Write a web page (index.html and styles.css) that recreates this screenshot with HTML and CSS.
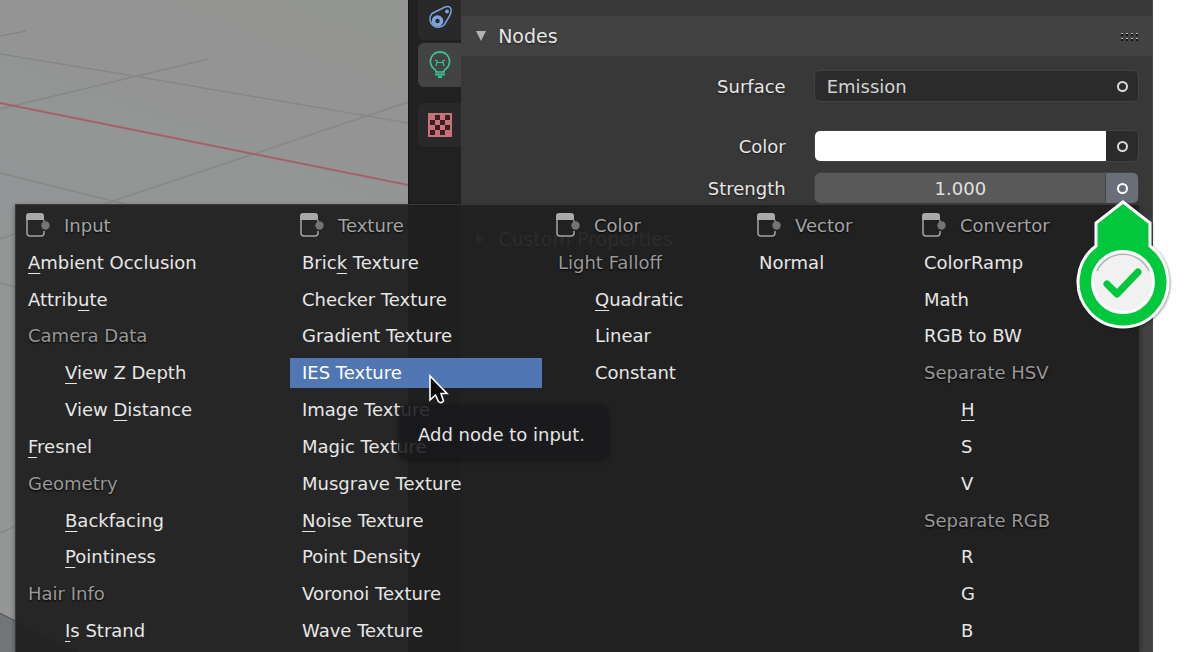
FILE: index.html
```html
<!DOCTYPE html>
<html lang="en">
<head>
    <meta charset="UTF-8">
    <meta name="viewport" content="width=device-width, initial-scale=1.0">
    <title>Light Nodes</title>
    <link rel="stylesheet" href="styles.css">
</head>
<body>
    <svg class="symbols" aria-hidden="true">
        <symbol id="node" viewBox="0 0 24 24">
            <path d="M1 6 V20 Q1 23 4 23 H15 Q18 23 18 20 V18" fill="none" stroke="#a4a4a4" stroke-width="1.500"/>
            <path d="M0 7 V3 Q0 0 3 0 H15 Q18 0 18 3 V7 Z" fill="#a9a9a9"/>
            <path d="M18 7 V9" stroke="#a4a4a4" stroke-width="1.200"/>
            <circle cx="19.500" cy="12.500" r="4.200" fill="#747474"/>
        </symbol>
    </svg>
    <div class="editor">
        <div class="viewport">
            <svg class="floor" viewBox="0 0 408 652" preserveAspectRatio="xMinYMin slice">
                <g class="grid-lines">
                    <path d="M0 36 L26 31"/>
                    <path d="M0 54 L134 76 L408 123"/>
                    <path d="M0 109 L208 59"/>
                    <path d="M0 173 L113 201 L408 102"/>
                    <path d="M113 201 L180 218"/>
                    <path d="M113 201 L0 239"/>
                    <path d="M0 283 L60 299"/>
                    <path d="M0 533 L60 505"/>
                </g>
                <path class="object" d="M-2 612 L78 652 L78 660 H-2 Z"/>
                <path class="axis" d="M0 103 L408 185"/>
            </svg>
        </div>
        <nav class="tabs">
            <button class="tab first" aria-label="Constraints">
                <svg width="26" height="26" viewBox="0 0 26 26" fill="none" stroke="#7fa3dc" stroke-width="1.500">
                    <path d="M5 8.500 L18 2 Q25 0 24 7 Q23.500 9 22 12 L17.500 19.500 A8.200 8.200 0 1 1 5 8.500 Z"/>
                    <circle cx="10.500" cy="16" r="4" stroke-width="3.600"/>
                    <circle cx="20" cy="6.500" r="1.900" fill="#7fa3dc" stroke="none"/>
                </svg>
            </button>
            <button class="tab active" aria-label="Object Data">
                <svg width="26" height="28" viewBox="0 0 26 28" fill="none" stroke="#35c79a" stroke-width="1.600">
                    <path d="M9 21 V20 Q9 19 6.500 17.500 A9.600 9.600 0 1 1 19.500 17.500 Q17 19 17 20 V21 Z"/>
                    <path d="M8 9.500 H10 V11.500 H16 V9.500 H18 M10 11.500 L9 15 M16 11.500 L17 15" stroke-width="1.200"/>
                    <path d="M8 23.500 H18" stroke-width="2"/>
                    <path d="M11 26 H15" stroke-width="2"/>
                </svg>
            </button>
            <button class="tab texture" aria-label="Texture">
                <svg width="24" height="24" viewBox="0 0 24 24">
                    <rect width="24" height="24" fill="#c9727a"/>
                    <path fill="#3a1f22" d="M7 2h5v5H7z M17 2h5v5h-5z M2 7h5v5H2z M12 7h5v5h-5z M7 12h5v5H7z M17 12h5v5h-5z M2 17h5v5H2z M12 17h5v5h-5z"/>
                </svg>
            </button>
        </nav>
        <main class="properties">
            <section class="panel">
                <h2 class="panel-title">
                    <svg width="12" height="10" viewBox="0 0 12 10"><path d="M1 0 H11 L6 10 Z" fill="#b4b4b4"/></svg>
                    Nodes
                    <svg class="grip" width="18" height="10" viewBox="0 0 18 10">
                        <path d="M0 4 H18 M0 9 H18" stroke="#111" stroke-width="2" stroke-dasharray="2 3"/>
                        <path d="M0 2.500 H18 M0 7.500 H18" stroke="#bbb" stroke-width="1" stroke-dasharray="2 3"/>
                    </svg>
                </h2>
                <div class="rows">
                    <div class="row surface">
                        <label for="surface">Surface</label>
                        <div class="field">
                            <select id="surface"><option>Emission</option></select>
                            <button class="socket" aria-label="Surface input"></button>
                        </div>
                    </div>
                    <div class="row">
                        <label for="color">Color</label>
                        <div class="field">
                            <input type="color" id="color" value="#ffffff">
                            <button class="socket" aria-label="Color input"></button>
                        </div>
                    </div>
                    <div class="row">
                        <label for="strength">Strength</label>
                        <div class="field">
                            <input type="text" id="strength" value="1.000">
                            <button class="socket pressed" aria-label="Strength input"></button>
                        </div>
                    </div>
                </div>
            </section>
            <section class="panel rest">
                <h2 class="panel-title">
                    <svg width="12" height="12" viewBox="0 0 12 12"><path d="M1 1 V11 L11 6 Z" fill="#b4b4b4"/></svg>
                    Custom Properties
                </h2>
            </section>
        </main>

        <div class="menu">
            <div class="column">
                <h3><svg class="icon"><use href="#node"/></svg>Input</h3>
                <button><u>A</u>mbient Occlusion</button>
                <button>Attrib<u>u</u>te</button>
                <span class="group">Camera Data</span>
                <button class="sub"><u>V</u>iew Z Depth</button>
                <button class="sub">View <u>D</u>istance</button>
                <button><u>F</u>resnel</button>
                <span class="group">Geometry</span>
                <button class="sub"><u>B</u>ackfacing</button>
                <button class="sub"><u>P</u>ointiness</button>
                <span class="group">Hair Info</span>
                <button class="sub"><u>I</u>s Strand</button>
            </div>
            <div class="column">
                <h3><svg class="icon"><use href="#node"/></svg>Texture</h3>
                <button>Bric<u>k</u> Texture</button>
                <button>Checker Texture</button>
                <button>Gradient Texture</button>
                <button class="selected">IES Texture</button>
                <button>Image Texture</button>
                <button>Magic Texture</button>
                <button>Musgrave Texture</button>
                <button><u>N</u>oise Texture</button>
                <button>Point Density</button>
                <button>Voronoi Texture</button>
                <button>Wave Texture</button>
            </div>
            <div class="column">
                <h3><svg class="icon"><use href="#node"/></svg>Color</h3>
                <span class="group">Light Falloff</span>
                <button class="sub"><u>Q</u>uadratic</button>
                <button class="sub">Linear</button>
                <button class="sub">Constant</button>
            </div>
            <div class="column">
                <h3><svg class="icon"><use href="#node"/></svg>Vector</h3>
                <button>Normal</button>
            </div>
            <div class="column">
                <h3><svg class="icon"><use href="#node"/></svg>Convertor</h3>
                <button>ColorRamp</button>
                <button>Math</button>
                <button>RGB to BW</button>
                <span class="group">Separate HSV</span>
                <button class="sub"><u>H</u></button>
                <button class="sub">S</button>
                <button class="sub">V</button>
                <span class="group">Separate RGB</span>
                <button class="sub">R</button>
                <button class="sub">G</button>
                <button class="sub">B</button>
            </div>
        </div>

        <div class="tooltip" role="tooltip">Add node to input.</div>

        <svg class="cursor" width="22" height="32" viewBox="0 0 22 32">
            <path d="M2 2 V26 L7.500 21 L10.500 27.500 Q13 30 15.500 27 L13 19.500 H19 Z" fill="#0a0a0a" stroke="#fff" stroke-width="1.600"/>
        </svg>

        <svg class="pin" width="100" height="136" viewBox="0 0 100 136">
            <path d="M50 3 L77 24 V47 A45 45 0 1 1 23 47 V24 Z" fill="#00c73c" stroke="#fff" stroke-width="3"/>
            <circle cx="50" cy="83" r="30.500" fill="#f1f1f1" stroke="#fff" stroke-width="3"/>
            <path d="M24 72 A28.500 28.500 0 0 1 76 72" fill="none" stroke="#b5b5b5" stroke-width="1.500"/>
            <path d="M34 85 L44 95 L65 73" fill="none" stroke="#00c73c" stroke-width="7" stroke-linecap="round" stroke-linejoin="round"/>
        </svg>
    </div>
</body>
</html>
```

FILE: styles.css
```css
* {
    box-sizing: border-box;
}

body {
    margin: 0;
    background: #ffffff;
    font-family: "DejaVu Sans", sans-serif;
    font-size: 18px;
    color: #e6e6e6;
}

button,
input,
select {
    margin: 0;
    padding: 0;
    border: none;
    font: inherit;
    color: inherit;
    background: none;
}

.symbols {
    position: absolute;
    width: 0;
    height: 0;
}

.editor {
    position: relative;
    display: flex;
    height: 100vh;
    overflow: hidden;
    padding-right: 47px;
}

/* 3D viewport */
.viewport {
    flex: 0 0 35.4%;
    min-width: 0;
    overflow: hidden;
    background: linear-gradient(200deg, #929491, #949596 40%, #949697);
}

.floor {
    display: block;
    width: 100%;
    height: 100%;
}

.grid-lines {
    fill: none;
    stroke: #868888;
    stroke-width: 1.5;
}

.axis {
    stroke: #a4606a;
    stroke-width: 2;
}

.object {
    fill: #737577;
    stroke: #4c4d4e;
}

/* editor tabs */
.tabs {
    display: flex;
    flex-direction: column;
    flex: 0 0 53px;
    padding-left: 9px;
    background: #212121;
    border-left: 1px solid #171717;
}

.tab {
    display: flex;
    align-items: center;
    justify-content: center;
    height: 44px;
    margin-bottom: 16px;
    border-radius: 6px 0 0 6px;
    background: #292929;
}

.tab.first {
    height: 40px;
    margin-bottom: 3px;
    padding-bottom: 4px;
    border-radius: 0 0 0 6px;
}

.tab.active {
    background: #434343;
}

/* properties */
.properties {
    display: flex;
    flex-direction: column;
    flex: 1;
    padding-top: 16px;
    background: #383838;
    border-right: 1px solid #484848;
}

.panel-title {
    display: flex;
    align-items: center;
    gap: 11px;
    height: 40px;
    margin: 0;
    padding: 0 13px 0 14px;
    background: #424242;
    font-size: 19px;
    font-weight: normal;
    text-shadow: 0 1px 2px #1c1c1c;
}

.grip {
    margin-left: auto;
}

.rows {
    display: flex;
    flex-direction: column;
    gap: 10px;
    padding: 14px 13px 15px 0;
}

.row {
    display: flex;
    align-items: center;
    gap: 28px;
}

.row.surface {
    margin-bottom: 18px;
}

.row label {
    flex: 1;
    text-align: right;
    text-shadow: 0 1px 2px #1c1c1c;
}

.field {
    display: flex;
    flex: 0 0 48%;
    height: 32px;
    overflow: hidden;
    border: 1px solid #424242;
    border-radius: 6px;
    background: #2b2b2b;
}

.field select,
.field input {
    flex: 1;
    min-width: 0;
    color: #d2d2d2;
}

.field select {
    appearance: none;
    padding-left: 12px;
}

.field input[type="color"] {
    height: 30px;
    appearance: none;
}

.field input::-webkit-color-swatch-wrapper {
    padding: 0;
}

.field input::-webkit-color-swatch {
    border: none;
}

.field input[type="text"] {
    background: #595959;
    text-align: center;
    color: #e0e0e0;
}

.socket {
    display: flex;
    align-items: center;
    justify-content: center;
    flex: 0 0 32px;
}

.socket::before {
    content: "";
    width: 7px;
    height: 7px;
    border: 2px solid #dadada;
    border-radius: 50%;
}

.socket.pressed {
    background: #6a6e79;
    box-shadow: -1px 0 0 #424242;
}

.socket.pressed::before {
    border-color: #ffffff;
}

.rest {
    flex: 1;
    background: #424242;
}

/* add node menu */
.menu {
    position: absolute;
    top: 204px;
    left: 15px;
    right: 60px;
    bottom: 0;
    display: grid;
    grid-template-columns: 274fr 256fr 201fr 165fr 227fr;
    padding: 2px 0 3px;
    border: 1px solid rgba(80, 80, 80, 0.5);
    border-bottom: none;
    background: rgba(32, 32, 32, 0.945);
    box-shadow: 0 2px 5px rgba(0, 0, 0, 0.4);
}

.column {
    display: grid;
    grid-template-rows: repeat(12, 1fr);
    align-items: center;
    padding-right: 4px;
}

.column h3 {
    display: flex;
    align-items: center;
    gap: 14px;
    margin: 0;
    padding-left: 10px;
    font-size: 18px;
    font-weight: normal;
    color: #a3a3a3;
    text-shadow: 0 1px 2px #000000;
}

.icon {
    width: 24px;
    height: 24px;
}

.column button {
    height: 30px;
    padding-left: 12px;
    text-align: left;
    white-space: nowrap;
}

.group {
    padding-left: 12px;
    color: #989898;
    text-shadow: 0 1px 2px #000000;
}

.column .sub {
    padding-left: 49px;
}

.column .selected {
    background: #5077b3;
    color: #ffffff;
}

.column u {
    text-decoration-thickness: 1px;
    text-underline-offset: 4px;
    text-decoration-skip-ink: none;
}

.tooltip {
    position: absolute;
    top: 405px;
    left: 399px;
    padding: 19px 23px 15px 19px;
    border-radius: 8px;
    background: rgba(25, 25, 27, 0.88);
    box-shadow: 0 1px 5px rgba(0, 0, 0, 0.4);
}

.cursor {
    position: absolute;
    top: 374px;
    left: 428px;
}

.pin {
    position: absolute;
    top: 199px;
    right: 27px;
    filter: drop-shadow(1px 1px 1px rgba(0, 0, 0, 0.35));
}
```
